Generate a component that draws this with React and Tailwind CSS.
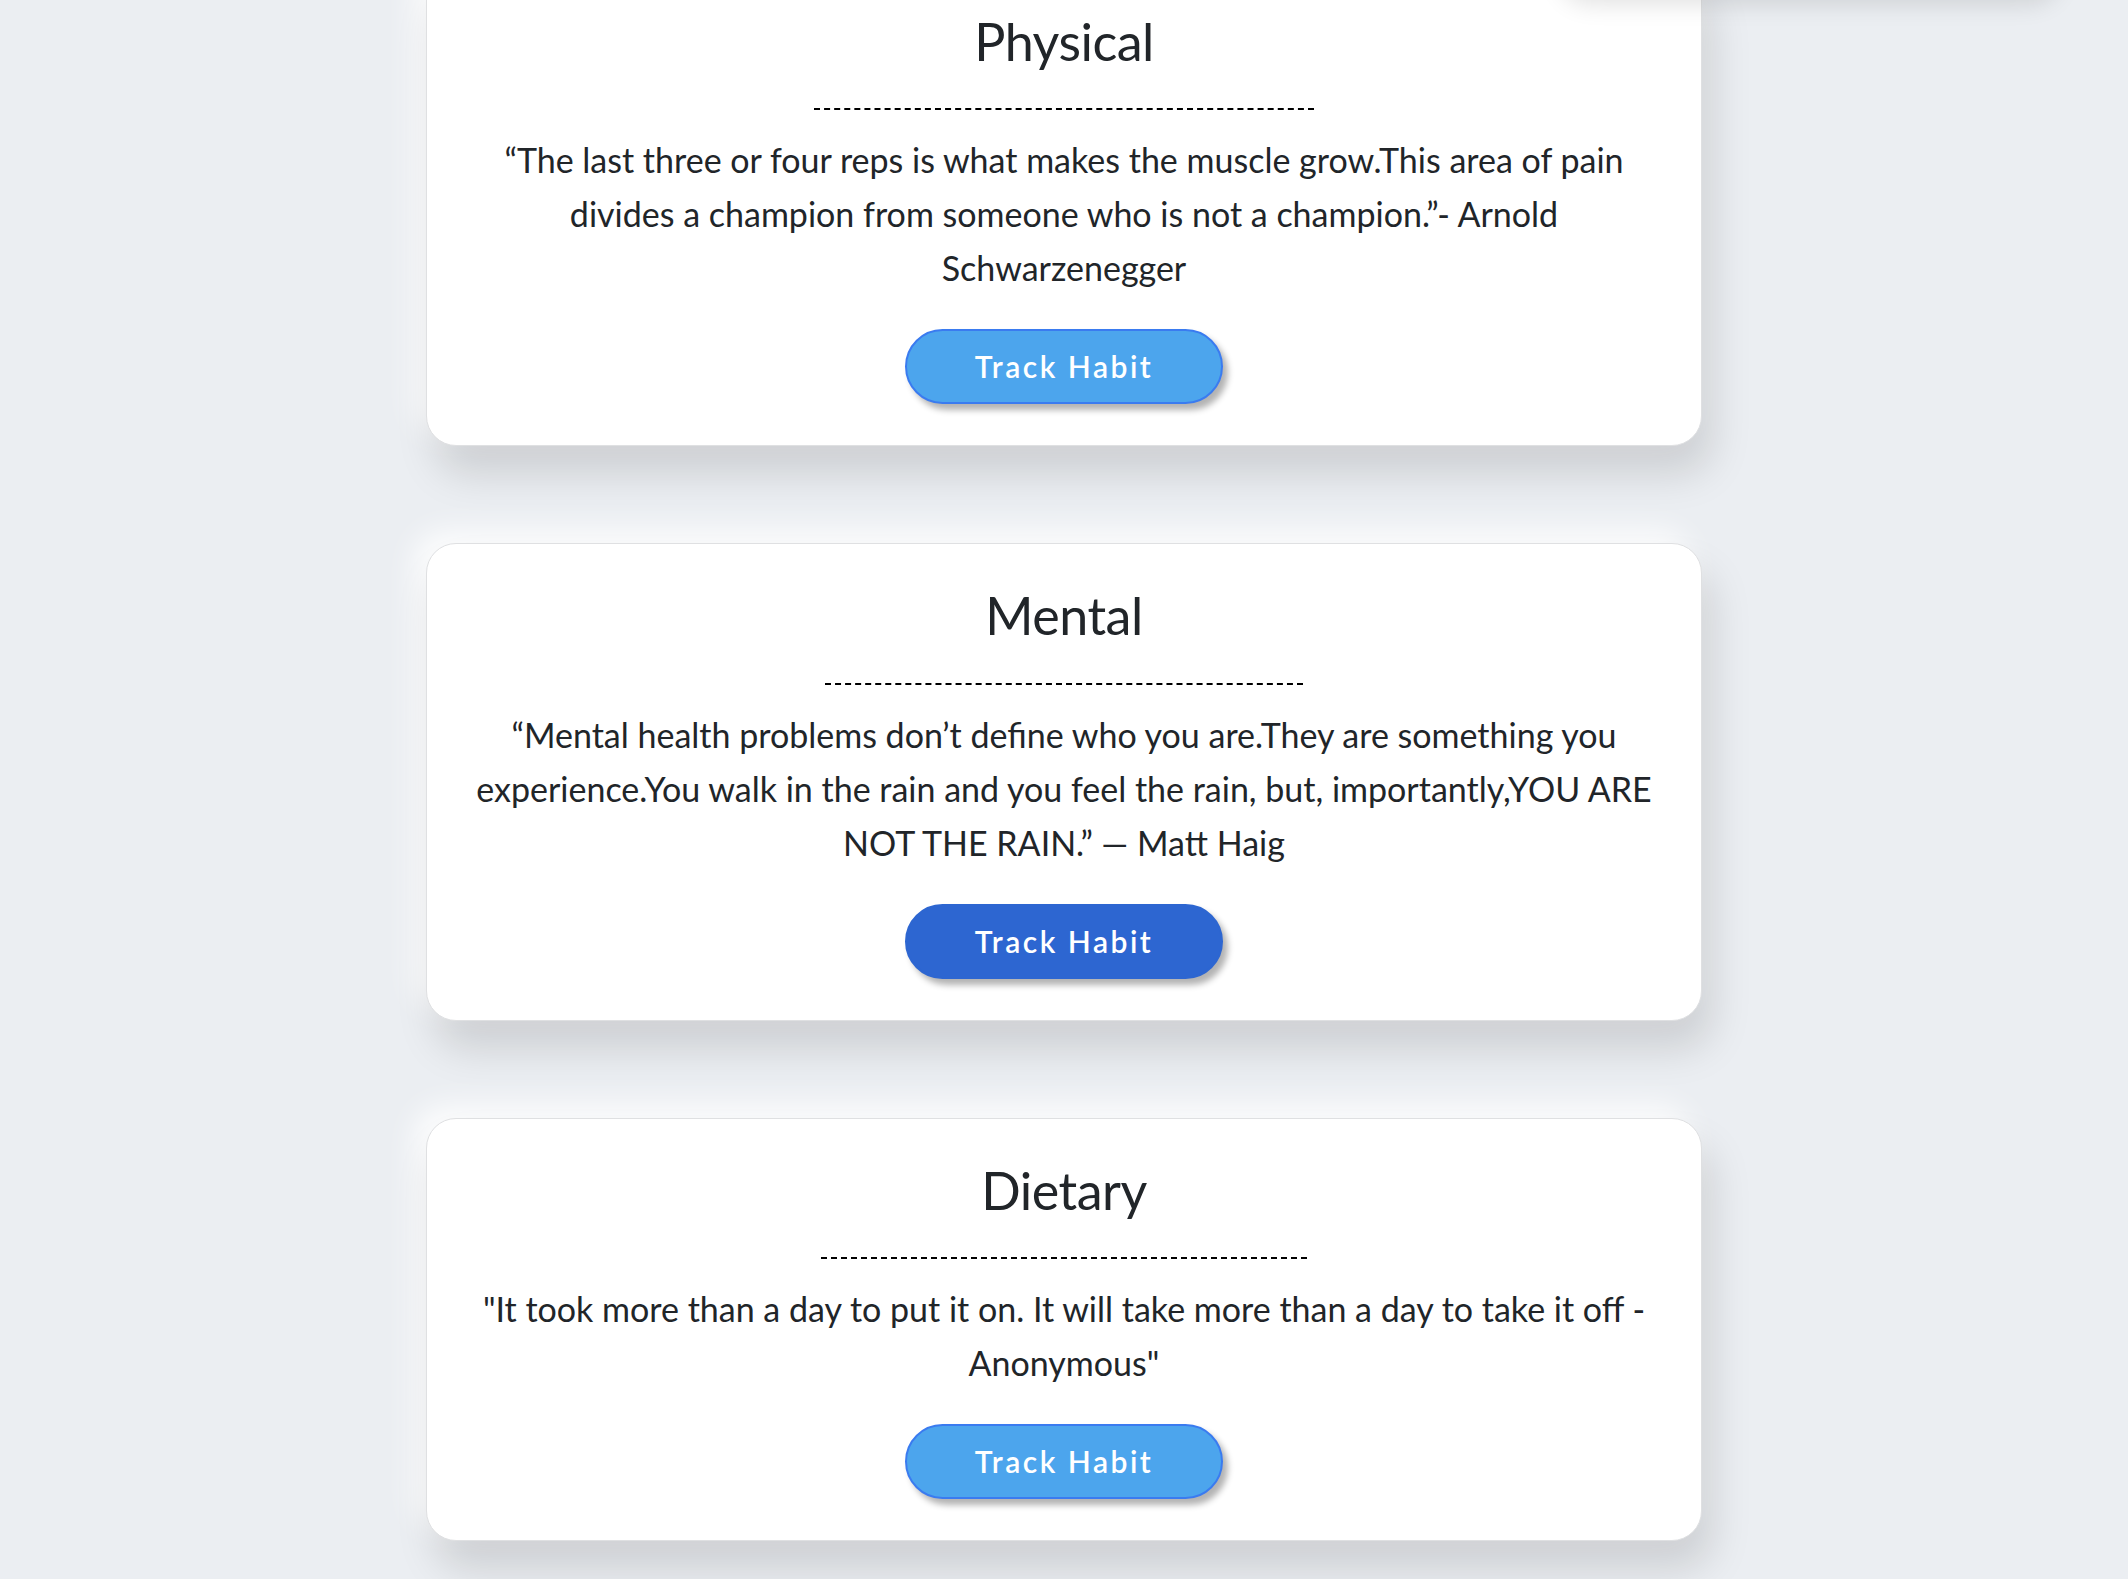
import React from 'react';

const habits = [
    {
        title: 'Physical',
        quote: '“The last three or four reps is what makes the muscle grow.This area of pain divides a champion from someone who is not a champion.”- Arnold Schwarzenegger',
        active: false,
    },
    {
        title: 'Mental',
        quote: '“Mental health problems don’t define who you are.They are something you experience.You walk in the rain and you feel the rain, but, importantly,YOU ARE NOT THE RAIN.” — Matt Haig',
        active: true,
    },
    {
        title: 'Dietary',
        quote: '"It took more than a day to put it on. It will take more than a day to take it off - Anonymous"',
        active: false,
    },
];

const HabitCard = ({ title, quote, active }) => (
    <div className="w-[60%] bg-white rounded-[30px] border border-[#dfe0e2] shadow-[10px_28px_40px_rgba(0,0,0,0.13),-12px_-12px_30px_rgba(255,255,255,0.9)] px-10 pt-[40px] pb-[41px] text-center">
        <h2 className="inline-block px-40 pb-[36px] border-b-2 border-dashed border-black text-[52px] leading-[1.2] tracking-[-0.5px] text-[#212529]">
            {title}
        </h2>
        <p className="mt-[23px] text-[34px] leading-[54px] text-[#212529]">
            {quote}
        </p>
        <button
            className={
                active
                    ? 'mt-[34px] w-[318px] h-[75px] rounded-full border-2 border-[#2d66d1] bg-[#2d66d1] text-white text-[30px] tracking-[2.5px] font-semibold shadow-[5px_6px_6px_rgba(0,0,0,0.3)]'
                    : 'mt-[34px] w-[318px] h-[75px] rounded-full border-2 border-[#3a7bf0] bg-[#4ca5ed] text-white text-[30px] tracking-[2.5px] font-semibold shadow-[5px_6px_6px_rgba(0,0,0,0.3)]'
            }
        >
            Track Habit
        </button>
    </div>
);

export default function App() {
    return (
        <div className="relative min-h-screen overflow-hidden bg-[#ebeef2] font-['Lato','Liberation_Sans',sans-serif]">
            {/* floating element above the fold */}
            <div className="absolute -top-[64px] left-[1560px] z-10 w-[500px] h-[60px] rounded-[30px] bg-white shadow-[0_8px_24px_rgba(0,0,0,0.12)]"></div>

            <div className="flex flex-col items-center gap-[97px] -mt-[31px] pb-16">
                {habits.map((h) => (
                    <HabitCard key={h.title} {...h} />
                ))}
            </div>
        </div>
    );
}
